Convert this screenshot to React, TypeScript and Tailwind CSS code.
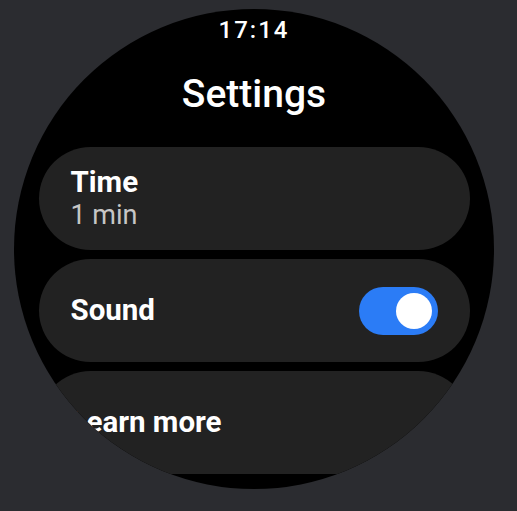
const Toggle = ({ on }: { on: boolean }) => (
  <div
    className={`flex h-[48px] w-[79px] shrink-0 items-center rounded-full px-[6px] ${
      on ? "justify-end bg-[#2b7cf6]" : "justify-start bg-[#5f6368]"
    }`}
  >
    <div className="h-[36px] w-[36px] rounded-full bg-white" />
  </div>
);

export default function App() {
  return (
    <div className="h-[511px] w-[517px] overflow-hidden bg-[#2b2c30] font-['Roboto',sans-serif] text-white">
      {/* Watch face */}
      <div className="ml-[14px] mt-[9px] flex h-[480px] w-[480px] flex-col items-center overflow-hidden rounded-full bg-black">
        <div className="pt-[9px] text-[24px] font-medium leading-[24px] tracking-[2px]">17:14</div>

        <h1 className="mt-[30px] text-[39px] font-medium leading-[44px]">Settings</h1>

        <div className="mt-[31px] flex w-[431px] flex-col gap-[9px]">
          {/* Time */}
          <div className="flex h-[103px] flex-col justify-center rounded-full bg-[#222222] pl-[32px] pr-[32px]">
            <span className="text-[29.5px] font-bold leading-[33px]">Time</span>
            <span className="text-[27px] leading-[33px] text-[#c6c6c6]">1 min</span>
          </div>

          {/* Sound */}
          <div className="flex h-[103px] items-center justify-between rounded-full bg-[#222222] pl-[32px] pr-[32px]">
            <span className="text-[29.5px] font-bold leading-[33px]">Sound</span>
            <Toggle on />
          </div>

          {/* Learn more */}
          <div className="flex h-[103px] items-center rounded-full bg-[#222222] pl-[32px] pr-[32px]">
            <span className="text-[29.5px] font-bold leading-[33px]">Learn more</span>
          </div>
        </div>
      </div>
    </div>
  );
}
